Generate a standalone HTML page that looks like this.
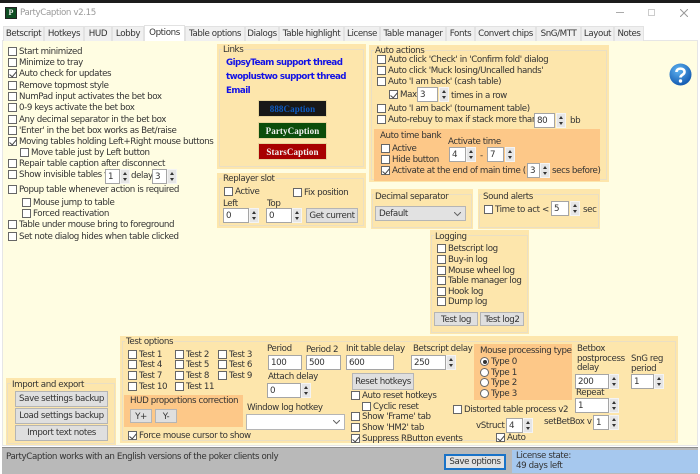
<!DOCTYPE html>
<html><head><meta charset="utf-8"><style>
html,body{margin:0;padding:0;width:700px;height:474px;overflow:hidden;background:#fff}
*{box-sizing:border-box}
body{font:10px/11px "DejaVu Sans",sans-serif;color:#333;position:relative}
body div,label,b.t,span.t{position:absolute;white-space:nowrap}
#r *{font-size:8.7px;letter-spacing:-.4px}
span.t{margin-top:1px}
.tab{top:26px;height:15px;background:#f0f0f0;border:1px solid #e2e2e2;border-bottom:0;text-align:center;line-height:15px}
.p{background:#fde6ac}
.f{border:1px solid #eadfc4}
.ti{background:#fde6ac;padding:0 1px;line-height:12px;height:10px}
label{height:11px;line-height:13px;padding-left:11px}
label i{position:absolute;left:0;top:1px;width:9px;height:9px;background:#fff;border:1px solid #666}
label i.k:after{content:"";position:absolute;left:2px;top:0;width:3px;height:6px;border:solid #444;border-width:0 1px 1px 0;transform:rotate(40deg)}
label i.o{border-radius:50%}
label i.d:after{content:"";position:absolute;left:1.5px;top:1.5px;width:4px;height:4px;border-radius:50%;background:#333}
.b{background:#fff;border:1px solid #a5a5a5;height:15px;line-height:14px;padding-left:2px}
.a{width:10px;height:15px;background:#e6e6e6;border:1px solid #f4f4f4}
.a:before{content:"";position:absolute;left:2px;top:2px;border:2.5px solid transparent;border-top:0;border-bottom:3px solid #333}
.a:after{content:"";position:absolute;left:2px;bottom:2px;border:2.5px solid transparent;border-bottom:0;border-top:3px solid #333}
.btn{background:#dfdfdf;border:1px solid #b5b5b5;text-align:center;line-height:15px}
.cap{left:258px;width:69px;height:17px;font:bold 9px/17px "Liberation Serif",serif!important;letter-spacing:.1px!important;text-align:center;border:1px solid #e8d49a}
#r .l{left:226px;color:#1212e6;font-weight:bold;letter-spacing:-.55px;line-height:12px}
.sel{background:#e2e2e2;border:1px solid #b5b5b5;height:15px;line-height:15px;padding-left:3px}
.sel svg{position:absolute;right:4px;top:5px}
</style></head><body><div id="r" style="left:0;top:0;width:700px;height:474px">
<div style="left:0;top:0;width:700px;height:3px;background:#1c1c1c"></div>
<div style="left:5px;top:7px;width:12px;height:12px;background:#0e4d22;border:1px solid #222;color:#eee;font:bold 8px/10px 'Liberation Serif',serif;text-align:center;letter-spacing:0">P</div>
<div style="left:20px;top:8px;color:#9a9a9a">PartyCaption v2.15</div>
<div style="left:616px;top:12px;width:8px;height:1px;background:#aaa"></div>
<div style="left:648px;top:9px;width:7px;height:7px;border:1px solid #ccc"></div>
<svg style="position:absolute;left:680px;top:9px" width="8" height="8"><path d="M0 0L8 8M8 0L0 8" stroke="#999" fill="none"/></svg>

<div style="left:2px;top:40px;width:696px;height:406px;background:#fffde2;border:1px solid #e6e6e6"></div>
<div class="tab" style="left:3px;width:41px">Betscript</div>
<div class="tab" style="left:44px;width:40px">Hotkeys</div>
<div class="tab" style="left:84px;width:28px">HUD</div>
<div class="tab" style="left:112px;width:32px">Lobby</div>
<div class="tab" style="left:144px;width:41px;top:25px;height:16px;background:#fff;line-height:14px;z-index:2">Options</div>
<div class="tab" style="left:185px;width:60px">Table options</div>
<div class="tab" style="left:245px;width:34px">Dialogs</div>
<div class="tab" style="left:279px;width:65px">Table highlight</div>
<div class="tab" style="left:344px;width:36px">License</div>
<div class="tab" style="left:380px;width:66px">Table manager</div>
<div class="tab" style="left:446px;width:29px">Fonts</div>
<div class="tab" style="left:475px;width:61px">Convert chips</div>
<div class="tab" style="left:536px;width:45px">SnG/MTT</div>
<div class="tab" style="left:581px;width:33px">Layout</div>
<div class="tab" style="left:614px;width:30px">Notes</div>

<label style="left:8px;top:46px"><i></i>Start minimized</label>
<label style="left:8px;top:57px"><i></i>Minimize to tray</label>
<label style="left:8px;top:68px"><i class="k"></i>Auto check for updates</label>
<label style="left:8px;top:80px"><i></i>Remove topmost style</label>
<label style="left:8px;top:91px"><i></i>NumPad input activates the bet box</label>
<label style="left:8px;top:102px"><i></i>0-9 keys activate the bet box</label>
<label style="left:8px;top:114px"><i></i>Any decimal separator in the bet box</label>
<label style="left:8px;top:125px"><i></i>'Enter' in the bet box works as Bet/raise</label>
<label style="left:8px;top:136px"><i class="k"></i>Moving tables holding Left+Right mouse buttons</label>
<label style="left:20px;top:147px"><i></i>Move table just by Left button</label>
<label style="left:8px;top:158px"><i></i>Repair table caption after disconnect</label>
<label style="left:8px;top:169px"><i></i>Show invisible tables v</label>
<div class="b" style="left:105px;top:169px;width:15px">1</div><div class="a" style="left:120px;top:169px"></div>
<span class="t" style="position:absolute;left:131px;top:170px">delay</span>
<div class="b" style="left:152px;top:169px;width:15px">3</div><div class="a" style="left:167px;top:169px"></div>
<label style="left:8px;top:184px"><i></i>Popup table whenever action is required</label>
<label style="left:22px;top:197px"><i></i>Mouse jump to table</label>
<label style="left:22px;top:208px"><i></i>Forced reactivation</label>
<label style="left:8px;top:219px"><i></i>Table under mouse bring to foreground</label>
<label style="left:8px;top:231px"><i></i>Set note dialog hides when table clicked</label>

<div class="p" style="left:217px;top:44px;width:149px;height:125px"></div>
<div class="f" style="left:219px;top:49px;width:145px;height:118px"></div>
<div class="ti" style="left:222px;top:44px">Links</div>
<div class="l" style="top:57px">GipsyTeam support thread</div>
<div class="l" style="top:71px">twoplustwo support thread</div>
<div class="l" style="top:85px">Email</div>
<div class="cap" style="top:100px;background:#181818;color:#0d5bc4">888Caption</div>
<div class="cap" style="top:122px;background:#0b4d0b;color:#f2f2f2">PartyCaption</div>
<div class="cap" style="top:143px;background:#a80000;color:#f2f2f2">StarsCaption</div>

<div class="p" style="left:217px;top:173px;width:149px;height:55px"></div>
<div class="f" style="left:219px;top:178px;width:145px;height:48px"></div>
<div class="ti" style="left:222px;top:173px">Replayer slot</div>
<label style="left:224px;top:186px"><i></i>Active</label>
<label style="left:293px;top:187px"><i></i>Fix position</label>
<span class="t" style="position:absolute;left:223px;top:198px">Left</span>
<span class="t" style="position:absolute;left:267px;top:198px">Top</span>
<div class="b" style="left:223px;top:208px;width:26px">0</div><div class="a" style="left:249px;top:208px"></div>
<div class="b" style="left:266px;top:208px;width:26px">0</div><div class="a" style="left:292px;top:208px"></div>
<div class="btn" style="left:306px;top:208px;width:52px;height:15px">Get current</div>

<div class="p" style="left:369px;top:45px;width:240px;height:137px"></div>
<div class="f" style="left:371px;top:50px;width:236px;height:130px"></div>
<div class="ti" style="left:374px;top:45px">Auto actions</div>
<label style="left:377px;top:54px"><i></i>Auto click 'Check' in 'Confirm fold' dialog</label>
<label style="left:377px;top:65px"><i></i>Auto click 'Muck losing/Uncalled hands'</label>
<label style="left:377px;top:76px"><i></i>Auto 'I am back' (cash table)</label>
<label style="left:389px;top:89px"><i class="k"></i>Max</label>
<div class="b" style="left:417px;top:87px;width:21px">3</div><div class="a" style="left:439px;top:87px"></div>
<span class="t" style="position:absolute;left:451px;top:90px">times in a row</span>
<label style="left:377px;top:103px"><i></i>Auto 'I am back' (tournament table)</label>
<label style="left:377px;top:114px"><i></i>Auto-rebuy to max if stack more than</label>
<div class="b" style="left:534px;top:113px;width:21px">80</div><div class="a" style="left:556px;top:113px"></div>
<span class="t" style="position:absolute;left:570px;top:115px">bb</span>

<div style="left:374px;top:129px;width:226px;height:52px;background:#fdc888"></div>
<div style="left:380px;top:130px;line-height:12px">Auto time bank</div>
<label style="left:381px;top:143px"><i></i>Active</label>
<label style="left:381px;top:154px"><i></i>Hide button</label>
<span class="t" style="position:absolute;left:448px;top:136px">Activate time</span>
<div class="b" style="left:449px;top:147px;width:17px">4</div><div class="a" style="left:466px;top:147px"></div>
<span class="t" style="position:absolute;left:480px;top:150px">-</span>
<div class="b" style="left:487px;top:147px;width:17px">7</div><div class="a" style="left:505px;top:147px"></div>
<label style="left:381px;top:165px"><i class="k"></i>Activate at the end of main time (</label>
<div class="b" style="left:527px;top:163px;width:13px">3</div><div class="a" style="left:540px;top:163px"></div>
<span class="t" style="position:absolute;left:552px;top:165px">secs before)</span>

<div class="p" style="left:371px;top:189px;width:102px;height:40px"></div>
<div class="f" style="left:372px;top:194px;width:100px;height:34px"></div>
<div class="ti" style="left:374px;top:191px">Decimal separator</div>
<div class="sel" style="left:375px;top:206px;width:91px">Default<svg width="7" height="5"><path d="M0 0L3.500 3.500L7 0" stroke="#666" fill="none"/></svg></div>

<div class="p" style="left:478px;top:189px;width:122px;height:40px"></div>
<div class="f" style="left:479px;top:194px;width:120px;height:34px"></div>
<div class="ti" style="left:482px;top:191px">Sound alerts</div>
<label style="left:484px;top:204px"><i></i>Time to act &lt;</label>
<div class="b" style="left:551px;top:201px;width:18px">5</div><div class="a" style="left:570px;top:201px"></div>
<span class="t" style="position:absolute;left:583px;top:204px">sec</span>

<div class="p" style="left:430px;top:230px;width:99px;height:104px"></div>
<div class="f" style="left:431px;top:235px;width:97px;height:98px"></div>
<div class="ti" style="left:434px;top:231px">Logging</div>
<label style="left:437px;top:243px"><i></i>Betscript log</label>
<label style="left:437px;top:254px"><i></i>Buy-in log</label>
<label style="left:437px;top:265px"><i></i>Mouse wheel log</label>
<label style="left:437px;top:275px"><i></i>Table manager log</label>
<label style="left:437px;top:286px"><i></i>Hook log</label>
<label style="left:437px;top:296px"><i></i>Dump log</label>
<div class="btn" style="left:434px;top:312px;width:44px;height:14px;line-height:14px">Test log</div>
<div class="btn" style="left:480px;top:312px;width:44px;height:14px;line-height:14px">Test log2</div>

<div class="p" style="left:120px;top:336px;width:558px;height:107px"></div>
<div class="f" style="left:122px;top:341px;width:554px;height:100px"></div>
<div class="ti" style="left:125px;top:336px">Test options</div>
<label style="left:128px;top:349px"><i></i>Test 1</label>
<label style="left:175px;top:349px"><i></i>Test 2</label>
<label style="left:218px;top:349px"><i></i>Test 3</label>
<label style="left:128px;top:359px"><i></i>Test 4</label>
<label style="left:175px;top:359px"><i></i>Test 5</label>
<label style="left:218px;top:359px"><i></i>Test 6</label>
<label style="left:128px;top:370px"><i></i>Test 7</label>
<label style="left:175px;top:370px"><i></i>Test 8</label>
<label style="left:218px;top:370px"><i></i>Test 9</label>
<label style="left:128px;top:381px"><i></i>Test 10</label>
<label style="left:175px;top:381px"><i></i>Test 11</label>
<div style="left:124px;top:395px;width:119px;height:32px;background:#fdc888"></div>
<div style="left:130px;top:395px;line-height:12px">HUD proportions correction</div>
<div class="btn" style="left:130px;top:409px;width:22px;height:14px">Y+</div>
<div class="btn" style="left:155px;top:409px;width:22px;height:14px">Y-</div>
<label style="left:128px;top:430px"><i class="k"></i>Force mouse cursor to show</label>

<span class="t" style="position:absolute;left:267px;top:343px">Period</span>
<span class="t" style="position:absolute;left:306px;top:344px">Period 2</span>
<span class="t" style="position:absolute;left:346px;top:343px">Init table delay</span>
<span class="t" style="position:absolute;left:413px;top:343px">Betscript delay</span>
<div class="b" style="left:268px;top:355px;width:34px">100</div>
<div class="b" style="left:306px;top:355px;width:35px">500</div>
<div class="b" style="left:346px;top:355px;width:48px">600</div>
<div class="b" style="left:411px;top:355px;width:35px">250</div><div class="a" style="left:446px;top:355px"></div>
<span class="t" style="position:absolute;left:268px;top:371px">Attach delay</span>
<div class="b" style="left:267px;top:383px;width:34px">0</div><div class="a" style="left:301px;top:383px"></div>
<div class="btn" style="left:352px;top:373px;width:62px;height:17px;line-height:17px">Reset hotkeys</div>
<label style="left:351px;top:390px"><i></i>Auto reset hotkeys</label>
<label style="left:362px;top:401px"><i></i>Cyclic reset</label>
<label style="left:453px;top:404px"><i></i>Distorted table process v2</label>
<label style="left:351px;top:411px"><i></i>Show 'Frame' tab</label>
<label style="left:351px;top:422px"><i></i>Show 'HM2' tab</label>
<label style="left:351px;top:433px"><i class="k"></i>Suppress RButton events</label>
<span class="t" style="position:absolute;left:247px;top:402px">Window log hotkey</span>
<div class="sel" style="left:246px;top:414px;width:99px;height:16px;background:#fff">&nbsp;<svg width="7" height="5"><path d="M0 0L3.500 3.500L7 0" stroke="#666" fill="none"/></svg></div>

<div style="left:474px;top:344px;width:98px;height:56px;background:#fdc888"></div>
<div style="left:480px;top:345px;line-height:12px">Mouse processing type</div>
<label style="left:480px;top:356px"><i class="o d"></i>Type 0</label>
<label style="left:480px;top:367px"><i class="o"></i>Type 1</label>
<label style="left:480px;top:377px"><i class="o"></i>Type 2</label>
<label style="left:480px;top:388px"><i class="o"></i>Type 3</label>
<span class="t" style="position:absolute;left:577px;top:344px;line-height:9.500px">Betbox<br>postprocess<br>delay</span>
<div class="b" style="left:575px;top:374px;width:34px">200</div><div class="a" style="left:609px;top:374px"></div>
<span class="t" style="position:absolute;left:576px;top:387px">Repeat</span>
<div class="b" style="left:575px;top:398px;width:34px">1</div><div class="a" style="left:609px;top:398px"></div>
<span class="t" style="position:absolute;left:631px;top:353px;line-height:10px">SnG reg<br>period</span>
<div class="b" style="left:631px;top:374px;width:23px">1</div><div class="a" style="left:654px;top:374px"></div>
<span class="t" style="position:absolute;left:544px;top:416px">setBetBox v</span>
<div class="b" style="left:593px;top:415px;width:16px">1</div><div class="a" style="left:609px;top:415px"></div>
<span class="t" style="position:absolute;left:476px;top:420px">vStruct</span>
<div class="b" style="left:506px;top:418px;width:17px">4</div><div class="a" style="left:523px;top:418px"></div>
<label style="left:496px;top:432px"><i class="k"></i>Auto</label>

<div class="p" style="left:6px;top:378px;width:110px;height:67px"></div>
<div class="f" style="left:7px;top:383px;width:108px;height:61px"></div>
<div class="ti" style="left:11px;top:379px">Import and export</div>
<div class="btn" style="left:15px;top:391px;width:93px;height:16px">Save settings backup</div>
<div class="btn" style="left:15px;top:408px;width:93px;height:16px">Load settings backup</div>
<div class="btn" style="left:15px;top:425px;width:93px;height:16px">Import text notes</div>

<div style="left:2px;top:447px;width:696px;height:27px;background:#b9b9b9;border-top:1px solid #8c8c8c"></div>
<div style="left:6px;top:451px;line-height:12px">PartyCaption works with an English versions of the poker clients only</div>
<div class="btn" style="left:444px;top:454px;width:62px;height:16px;border:2px solid #1a73c8;background:#e2e2e2;line-height:13px">Save options</div>
<div style="left:512px;top:450px;width:186px;height:23px;background:#a6c8ee;padding:1px 4px;line-height:10px">License state:<br>49 days left</div>

<svg style="position:absolute;left:669px;top:63px" width="23" height="23" viewBox="0 0 23 23"><defs><radialGradient id="g" cx=".4" cy=".3" r=".8"><stop offset="0" stop-color="#5fb4f2"/><stop offset="1" stop-color="#0a4fa8"/></radialGradient></defs><circle cx="11.500" cy="11.500" r="11" fill="url(#g)"/><path d="M7.500 9C7.500 4.500 15.500 4.500 15.500 9C15.500 12 11.500 11.500 11.500 14.500" stroke="#fff" stroke-width="2.600" fill="none"/><circle cx="11.500" cy="18" r="1.700" fill="#fff"/></svg>
</div></body></html>
